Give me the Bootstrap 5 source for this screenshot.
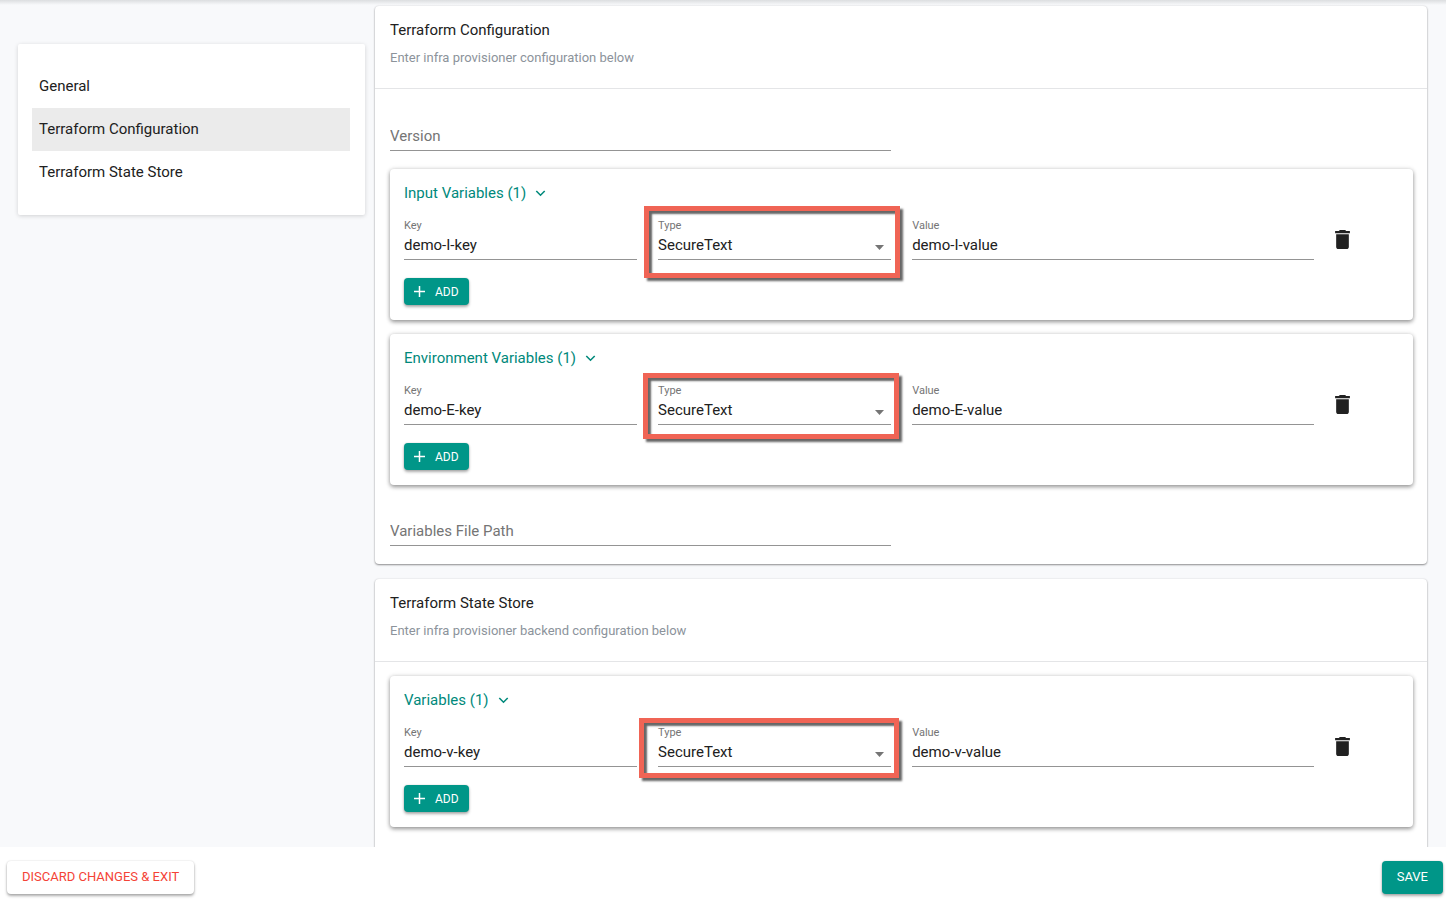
<!DOCTYPE html>
<html lang="en">
<head>
<meta charset="utf-8">
<meta name="viewport" content="width=device-width, initial-scale=1">
<title>Infrastructure Provisioner</title>
<link href="https://cdn.jsdelivr.net/npm/bootstrap@5.3.0/dist/css/bootstrap.min.css" rel="stylesheet">
<style>
body { font-family: Roboto, "Liberation Sans", sans-serif; font-size: 15px; line-height: 20px; color: #212121; background: #f8f9fb; }
.page-scroll { min-height: 0; padding: 6px 19px 0 18px; gap: 10px; }
.page-scroll::before { content: ""; position: absolute; inset: 0 0 auto 0; height: 5px; background: linear-gradient(#dcdee0, rgba(248,249,251,0)); }
.side-menu { flex: 0 0 347px; margin-top: 38px; padding: 21px 15px 21px 14px; background: #fff; border-radius: 2px; box-shadow: 0 1px 4px rgba(0,0,0,.16); }
.side-menu .nav-link { padding: 11px 7px; line-height: 21px; color: #212121; border-radius: 0; }
.side-menu .nav-link.active { background: #ebebeb; }
.section-panel { background: #fff; border-radius: 4px; box-shadow: 0 1px 2px rgba(0,0,0,.42), 0 0 2px rgba(0,0,0,.1); }
.section-panel + .section-panel { margin-top: 15px; }
.section-head { padding: 13px 15px 20px; border-bottom: 1px solid #e4e5e7; }
.section-head h1 { font-size: 15px; line-height: 22px; font-weight: 400; margin: 0 0 7px; }
.section-head p { font-size: 13px; line-height: 20px; color: #8c939b; margin: 0; }
.section-body { padding: 14px 14px 18px 15px; }
.line-input { width: 49%; display: block; border: 0; border-bottom: 1px solid #949494; padding: 0 0 4px; height: 26px; background: transparent; outline: 0; color: #212121; }
.line-input::placeholder { color: #757575; opacity: 1; }
.version-input { margin: 22px 0 18px; }
.path-input { margin-top: 35px; }
.vars-panel { padding: 14px 14px 15px; background: #fff; border-radius: 4px; box-shadow: 0 2px 4px rgba(0,0,0,.38), 0 0 5px rgba(0,0,0,.12); }
.vars-panel + .vars-panel { margin-top: 14px; }
.toggle-btn, .toggle-btn:hover { color: #00897b; }
.toggle-btn { font-size: 15px; line-height: 20px; gap: 9px; margin-bottom: 15px; }
.var-row { display: grid; grid-template-columns: minmax(0,58fr) minmax(0,58fr) minmax(0,100fr) 64px; column-gap: 21px; margin-bottom: 18px; }
.var-row label { display: block; font-size: 11px; line-height: 16px; color: #757575; }
.var-row .line-input { width: 100%; padding-bottom: 3px; }
.var-row select { appearance: none; }
.caret-mark { position: absolute; right: 7px; bottom: 10px; pointer-events: none; }
.highlight-box { position: absolute; border: 5px solid #f06455; box-shadow: 3px 3px 2px #666, inset 3px 3px 2px #666; pointer-events: none; z-index: 1; }
.highlight-input { inset: -12px -9px -18px -14px; }
.highlight-env { inset: -10px -8px -14px -15px; }
.highlight-state { inset: -7px -8px -11px -19px; }
.raised { border: 0; border-radius: 4px; font-weight: 400; box-shadow: 0 2px 3px rgba(0,0,0,.32), 0 0 2px rgba(0,0,0,.14); }
.teal { background: #009688; color: #fff; }
.add-btn { height: 27px; min-width: 64px; padding: 0 10px; font-size: 12px; gap: 10px; }
.action-bar { height: 52px; padding: 8px 3px 0 7px; background: #fff; z-index: 2; }
.action-bar button { height: 33px; padding: 0 15px; font-size: 13px; line-height: 32px; }
.action-bar .discard { background: #fff; color: #f44336; padding: 0 15px; }
</style>
</head>
<body class="vh-100 d-flex flex-column overflow-hidden">
<div class="page-scroll position-relative flex-grow-1 d-flex align-items-start overflow-hidden">
  <nav class="side-menu nav flex-column">
    <a class="nav-link" href="#general">General</a>
    <a class="nav-link active" href="#config">Terraform Configuration</a>
    <a class="nav-link" href="#state">Terraform State Store</a>
  </nav>
  <main class="flex-grow-1">
    <section class="section-panel" id="config">
      <header class="section-head">
        <h1>Terraform Configuration</h1>
        <p>Enter infra provisioner configuration below</p>
      </header>
      <div class="section-body">
        <input class="line-input version-input" type="text" placeholder="Version" aria-label="Version">
        <div class="vars-panel">
          <button class="toggle-btn btn p-0 border-0 d-flex align-items-center" type="button">Input Variables (1)
            <svg width="11" height="7" viewBox="0 0 12 8" fill="none" stroke="currentColor" stroke-width="1.8"><path d="M1.2 1.2 6 6l4.8-4.8"/></svg></button>
          <div class="var-row">
            <div><label for="k1">Key</label><input class="line-input" id="k1" value="demo-I-key"></div>
            <div class="position-relative"><label for="t1">Type</label><select class="line-input" id="t1"><option>SecureText</option></select>
              <svg class="caret-mark" width="9" height="5" viewBox="0 0 9 5"><path d="M0 0h9L4.5 5z" fill="#757575"/></svg><span class="highlight-box highlight-input"></span></div>
            <div><label for="v1">Value</label><input class="line-input" id="v1" value="demo-I-value"></div>
            <button class="btn p-0 border-0 align-self-center text-start" type="button" aria-label="Delete"><svg class="d-block" width="15" height="19" viewBox="5 3 14 18" fill="#212121"><path d="M6 19c0 1.1.9 2 2 2h8c1.1 0 2-.9 2-2V7H6v12zM19 4h-3.5l-1-1h-5l-1 1H5v2h14V4z"/></svg></button>
          </div>
          <button class="raised teal add-btn d-flex align-items-center" type="button"><svg width="11" height="11" viewBox="0 0 11 11" stroke="#fff" stroke-width="1.5"><path d="M5.5 0v11M0 5.5h11"/></svg>ADD</button>
        </div>
        <div class="vars-panel">
          <button class="toggle-btn btn p-0 border-0 d-flex align-items-center" type="button">Environment Variables (1)
            <svg width="11" height="7" viewBox="0 0 12 8" fill="none" stroke="currentColor" stroke-width="1.8"><path d="M1.2 1.2 6 6l4.8-4.8"/></svg></button>
          <div class="var-row">
            <div><label for="k2">Key</label><input class="line-input" id="k2" value="demo-E-key"></div>
            <div class="position-relative"><label for="t2">Type</label><select class="line-input" id="t2"><option>SecureText</option></select>
              <svg class="caret-mark" width="9" height="5" viewBox="0 0 9 5"><path d="M0 0h9L4.5 5z" fill="#757575"/></svg><span class="highlight-box highlight-env"></span></div>
            <div><label for="v2">Value</label><input class="line-input" id="v2" value="demo-E-value"></div>
            <button class="btn p-0 border-0 align-self-center text-start" type="button" aria-label="Delete"><svg class="d-block" width="15" height="19" viewBox="5 3 14 18" fill="#212121"><path d="M6 19c0 1.1.9 2 2 2h8c1.1 0 2-.9 2-2V7H6v12zM19 4h-3.5l-1-1h-5l-1 1H5v2h14V4z"/></svg></button>
          </div>
          <button class="raised teal add-btn d-flex align-items-center" type="button"><svg width="11" height="11" viewBox="0 0 11 11" stroke="#fff" stroke-width="1.5"><path d="M5.5 0v11M0 5.5h11"/></svg>ADD</button>
        </div>
        <input class="line-input path-input" type="text" placeholder="Variables File Path" aria-label="Variables File Path">
      </div>
    </section>
    <section class="section-panel" id="state">
      <header class="section-head">
        <h1>Terraform State Store</h1>
        <p>Enter infra provisioner backend configuration below</p>
      </header>
      <div class="section-body pb-5">
        <div class="vars-panel">
          <button class="toggle-btn btn p-0 border-0 d-flex align-items-center" type="button">Variables (1)
            <svg width="11" height="7" viewBox="0 0 12 8" fill="none" stroke="currentColor" stroke-width="1.8"><path d="M1.2 1.2 6 6l4.8-4.8"/></svg></button>
          <div class="var-row">
            <div><label for="k3">Key</label><input class="line-input" id="k3" value="demo-v-key"></div>
            <div class="position-relative"><label for="t3">Type</label><select class="line-input" id="t3"><option>SecureText</option></select>
              <svg class="caret-mark" width="9" height="5" viewBox="0 0 9 5"><path d="M0 0h9L4.5 5z" fill="#757575"/></svg><span class="highlight-box highlight-state"></span></div>
            <div><label for="v3">Value</label><input class="line-input" id="v3" value="demo-v-value"></div>
            <button class="btn p-0 border-0 align-self-center text-start" type="button" aria-label="Delete"><svg class="d-block" width="15" height="19" viewBox="5 3 14 18" fill="#212121"><path d="M6 19c0 1.1.9 2 2 2h8c1.1 0 2-.9 2-2V7H6v12zM19 4h-3.5l-1-1h-5l-1 1H5v2h14V4z"/></svg></button>
          </div>
          <button class="raised teal add-btn d-flex align-items-center" type="button"><svg width="11" height="11" viewBox="0 0 11 11" stroke="#fff" stroke-width="1.5"><path d="M5.5 0v11M0 5.5h11"/></svg>ADD</button>
        </div>
      </div>
    </section>
  </main>
</div>
<footer class="action-bar flex-shrink-0 d-flex justify-content-between align-items-center">
  <button class="raised discard" type="button">DISCARD CHANGES &amp; EXIT</button>
  <button class="raised teal" type="button">SAVE</button>
</footer>
<script src="https://cdn.jsdelivr.net/npm/bootstrap@5.3.0/dist/js/bootstrap.bundle.min.js"></script>
</body>
</html>
